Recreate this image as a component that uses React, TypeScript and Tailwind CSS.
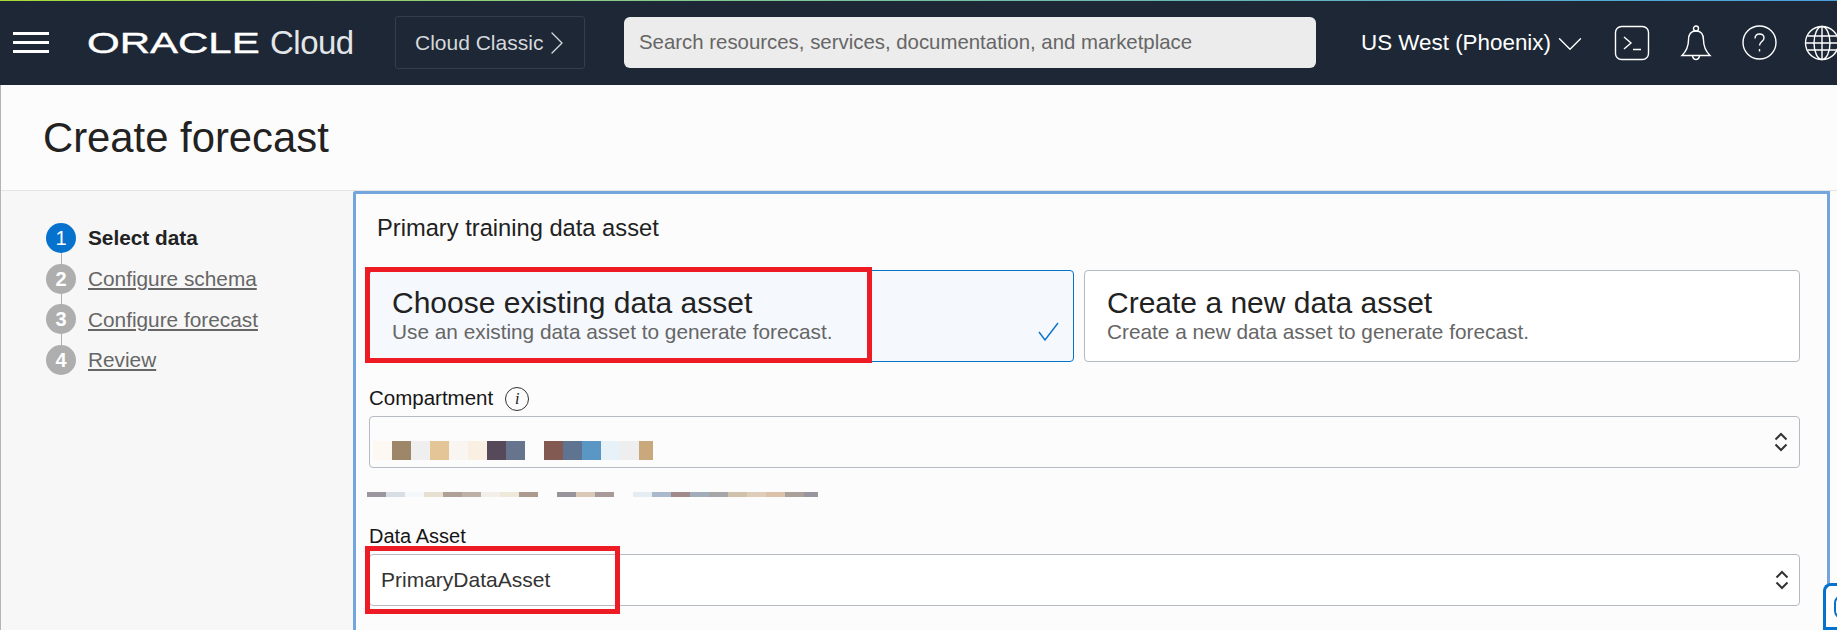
import { ChevronDown, ChevronRight } from "lucide-react";

const font = "font-['Liberation_Sans',Arial,sans-serif]";

const steps = [
    { n: 1, label: "Select data", active: true },
    { n: 2, label: "Configure schema" },
    { n: 3, label: "Configure forecast" },
    { n: 4, label: "Review" },
];

// blurred-out text in the screenshot
const compartmentBlur = [
    "bg-[#fdf8f2]", "bg-[#9e8768]", "bg-[#efefef]", "bg-[#e3c598]", "bg-[#f9f5f0]", "bg-[#f9f0e3]",
    "bg-[#55495a]", "bg-[#66758d]", "bg-transparent", "bg-[#825a52]", "bg-[#5f7490]", "bg-[#5b97c5]",
    "bg-[#e7f2f8]", "bg-[#eeeeee]",
];

const pathBlur = [
    "bg-[#9b979f]", "bg-[#d8dee6]", "bg-[#f5f8fa]", "bg-[#e8e0d0]", "bg-[#afa198]", "bg-[#bdb0a6]",
    "bg-[#f2efea]", "bg-[#efe9dc]", "bg-[#ac9a8e]", "bg-transparent", "bg-[#98949c]", "bg-[#d9c9b6]",
    "bg-[#a89a98]", "bg-transparent", "bg-[#e6edf2]", "bg-[#aab9cc]", "bg-[#a08a8c]", "bg-[#a1adba]",
    "bg-[#a6a6a8]", "bg-[#d1c3ab]", "bg-[#dfcdbb]", "bg-[#dcc2a8]", "bg-[#aca09a]",
];

function UpDown() {
    return (
        <svg className="w-[16px] h-[24px] shrink-0" viewBox="0 0 16 24" fill="none" stroke="#333" strokeWidth="2">
            <path d="M2.500 9.500 8 4l5.500 5.500M2.500 14.500 8 20l5.500-5.500" />
        </svg>
    );
}

function TerminalIcon() {
    return (
        <svg className="w-[36px] h-[36px] shrink-0" viewBox="0 0 36 36" fill="none" stroke="#fff" strokeWidth="1.4">
            <rect x="1.5" y="1.5" width="33" height="33" rx="6" />
            <path d="M10 12l7 6-7 6M19 24.5h8" />
        </svg>
    );
}

function BellIcon() {
    return (
        <svg className="w-[32px] h-[36px] shrink-0" viewBox="0 0 32 36" fill="none" stroke="#fff" strokeWidth="1.4">
            <circle cx="16" cy="3.5" r="2.5" />
            <path d="M16 6c-5.5 0-7.5 4-7.5 9 0 7-2 11-6.5 15.5h28C25.5 26 23.500 22 23.500 15c0-5-2-9-7.500-9Z" />
            <path d="M12.500 31c.5 2.500 2 3.500 3.500 3.500s3-1 3.500-3.500" />
        </svg>
    );
}

function HelpIcon() {
    return (
        <svg className="w-[35px] h-[35px] shrink-0" viewBox="0 0 35 35" fill="none" stroke="#fff" strokeWidth="1.4">
            <circle cx="17.500" cy="17.500" r="16.500" />
            <path d="M13 13.500c0-3 2-4.500 4.500-4.500s4.500 1.500 4.500 4c0 3.500-4.500 3.500-4.500 7.500" />
            <path d="M17.500 24v2.500" />
        </svg>
    );
}

function GlobeIcon() {
    return (
        <svg className="w-[36px] h-[36px] shrink-0 -ml-[3px]" viewBox="0 0 36 36" fill="none" stroke="#fff" strokeWidth="1.4">
            <circle cx="18" cy="18" r="16.500" />
            <ellipse cx="18" cy="18" rx="8" ry="16.500" />
            <path d="M18 1.500v33M3.500 11h29M1.500 18h33M3.500 25h29" />
        </svg>
    );
}

function Header() {
    return (
        <header className="h-[85px] shrink-0 bg-[#1d2735] relative overflow-hidden flex items-center">
            <div className="absolute top-0 inset-x-0 h-px bg-gradient-to-r from-[#a8dc32] to-[#4a9fe0]" />
            <div className="ml-[13px] w-[36px] h-[21px] shrink-0 flex flex-col justify-between">
                <div className="h-[3px] bg-white" />
                <div className="h-[3px] bg-white" />
                <div className="h-[3px] bg-white" />
            </div>
            <div className="ml-[38px] w-[171px] shrink-0 overflow-visible">
                <span className="block origin-left scale-x-[1.4] text-[30px] leading-none text-white [-webkit-text-stroke:0.4px_white]">
                    ORACLE
                </span>
            </div>
            <span className="ml-[12px] w-[83px] shrink-0 text-[33px] leading-none text-[#e3e5e8] tracking-[-0.5px]">
                Cloud
            </span>
            <button className="ml-[42px] w-[190px] h-[53px] shrink-0 rounded-[3px] border border-[#333d4b] flex items-center pl-[19px] text-[21px] text-[#d5d8dc] whitespace-nowrap">
                Cloud Classic
                <ChevronRight className="w-[40px] h-[40px] shrink-0 -ml-[6px] text-[#d5d8dc]" strokeWidth={0.8} />
            </button>
            <div className="ml-[39px] w-[692px] h-[51px] shrink-0 rounded-[6px] bg-[#ececec] flex items-center pl-[15px] text-[20.4px] text-[#666] whitespace-nowrap">
                Search resources, services, documentation, and marketplace
            </div>
            <div className="ml-[45px] w-[219px] flex items-center shrink-0 text-[22.4px] text-white whitespace-nowrap">
                US West (Phoenix)
                <ChevronDown className="w-[42px] h-[42px] shrink-0 -ml-[2px] mt-[3px]" strokeWidth={0.8} />
            </div>
            <div className="ml-[34px] flex items-center shrink-0 gap-[30px]">
                <TerminalIcon />
                <BellIcon />
                <HelpIcon />
                <GlobeIcon />
            </div>
        </header>
    );
}

function StepList() {
    return (
        <aside className="w-[352px] shrink-0 bg-[#f7f7f7] pl-[45px] pt-[32px]">
            {steps.map((step, i) => (
                <div key={step.n} className="h-[40.67px] flex items-start gap-[12px]">
                    <div className="w-[30px] flex flex-col items-center shrink-0">
                        <div
                            className={
                                step.active
                                    ? "w-[30px] h-[30px] rounded-full bg-[#0572ce] text-white text-[20px] flex items-center justify-center"
                                    : "w-[30px] h-[30px] rounded-full bg-[#aeaeae] text-white text-[20px] flex items-center justify-center font-bold"
                            }
                        >
                            {step.n}
                        </div>
                        {i < steps.length - 1 && <div className="w-px h-[11px] bg-[#aeaeae]" />}
                    </div>
                    <div className="h-[30px] flex items-center text-[20.800px] whitespace-nowrap">
                        {step.active ? (
                            <span className="font-bold text-[#222]">{step.label}</span>
                        ) : (
                            <span className="text-[#666] underline">{step.label}</span>
                        )}
                    </div>
                </div>
            ))}
        </aside>
    );
}

function AssetCard({ title, desc, selected }: { title: string; desc: string; selected?: boolean }) {
    return (
        <div
            className={
                selected
                    ? "relative h-[92px] w-full rounded-[4px] border border-[#0572ce] bg-[#f5f8fd] pl-[22px] pt-[16px]"
                    : "relative h-[92px] w-full rounded-[4px] border border-[#b6bac4] bg-white pl-[22px] pt-[16px]"
            }
        >
            <div className="text-[30px] leading-[32px] text-[#222]">{title}</div>
            <div className="text-[20.800px] leading-[25px] text-[#666]">{desc}</div>
            {selected && (
                <svg className="absolute right-[14px] bottom-[20px] w-[21px] h-[19px]" viewBox="0 0 21 19" fill="none" stroke="#0572ce" strokeWidth="1.4">
                    <path d="M1 10l6 8L20 1" />
                </svg>
            )}
        </div>
    );
}

export default function App() {
    return (
        <div className={`${font} w-full h-[630px] overflow-hidden relative flex flex-col bg-[#fcfcfc]`}>
            <Header />
            <div className="flex-1 flex flex-col border-l border-[#b4b4b4] min-h-0">
                <div className="h-[106px] shrink-0 border-b border-[#e4e4e4] pl-[42px] pt-[30px]">
                    <h1 className="text-[41.800px] leading-[46px] text-[#222]">Create forecast</h1>
                </div>
                <div className="flex-1 flex min-h-0">
                    <StepList />
                    <section className="flex-1 mr-[7px] border-[3px] border-b-0 border-[#74a5dc] rounded-tl-[3px] pl-[13px] pr-[27px] pt-[20px]">
                        <h2 className="ml-[8px] text-[23.700px] leading-[28px] text-[#222]">Primary training data asset</h2>
                        <div className="mt-[28px] flex gap-[10px]">
                            <div className="relative w-[705px] shrink-0">
                                <AssetCard
                                    selected
                                    title="Choose existing data asset"
                                    desc="Use an existing data asset to generate forecast."
                                />
                                <div className="absolute left-[-4px] top-[-3px] w-[507px] h-[96px] border-[5px] border-[#ed1c24]" />
                            </div>
                            <div className="flex-1">
                                <AssetCard title="Create a new data asset" desc="Create a new data asset to generate forecast." />
                            </div>
                        </div>

                        <div className="mt-[19px] h-[35px] flex items-center gap-[12px] text-[20.500px] text-[#161616]">
                            Compartment
                            <span className="w-[24px] h-[24px] rounded-full border border-[#333] flex items-center justify-center text-[16px] italic font-['Liberation_Serif',serif]">
                                i
                            </span>
                        </div>
                        <div className="h-[52px] rounded-[4px] border border-[#b6bac4] flex items-center pr-[10px]">
                            <div className="ml-[3px] mt-[17px] flex">
                                {compartmentBlur.map((c, i) => (
                                    <div key={i} className={`w-[19px] h-[19px] ${c}`} />
                                ))}
                                <div className="w-[14px] h-[19px] bg-[#c9a97c]" />
                            </div>
                            <div className="ml-auto">
                                <UpDown />
                            </div>
                        </div>
                        <div className="mt-[24px] -ml-[2px] flex">
                            {pathBlur.map((c, i) => (
                                <div key={i} className={`w-[19px] h-[5px] ${c}`} />
                            ))}
                            <div className="w-[14px] h-[5px] bg-[#98959e]" />
                        </div>

                        <div className="mt-[20px] h-[37px] flex items-center text-[20px] text-[#161616]">Data Asset</div>
                        <div className="relative h-[52px] rounded-[4px] border border-[#b6bac4] bg-white flex items-center pl-[11px] pr-[9px] text-[21px] text-[#333]">
                            PrimaryDataAsset
                            <div className="ml-auto">
                                <UpDown />
                            </div>
                            <div className="absolute left-[-5px] top-[-9px] w-[255px] h-[68px] border-[5px] border-[#ed1c24]" />
                        </div>
                    </section>
                </div>
            </div>
            <div className="absolute right-0 bottom-0 w-[14px] h-[47px] rounded-tl-[8px] border-[3px] border-r-0 border-[#0572ce] bg-white flex items-center overflow-hidden">
                <div className="ml-[8px] w-[16px] h-[24px] shrink-0 rounded-full border-2 border-[#0572ce]" />
            </div>
        </div>
    );
}
